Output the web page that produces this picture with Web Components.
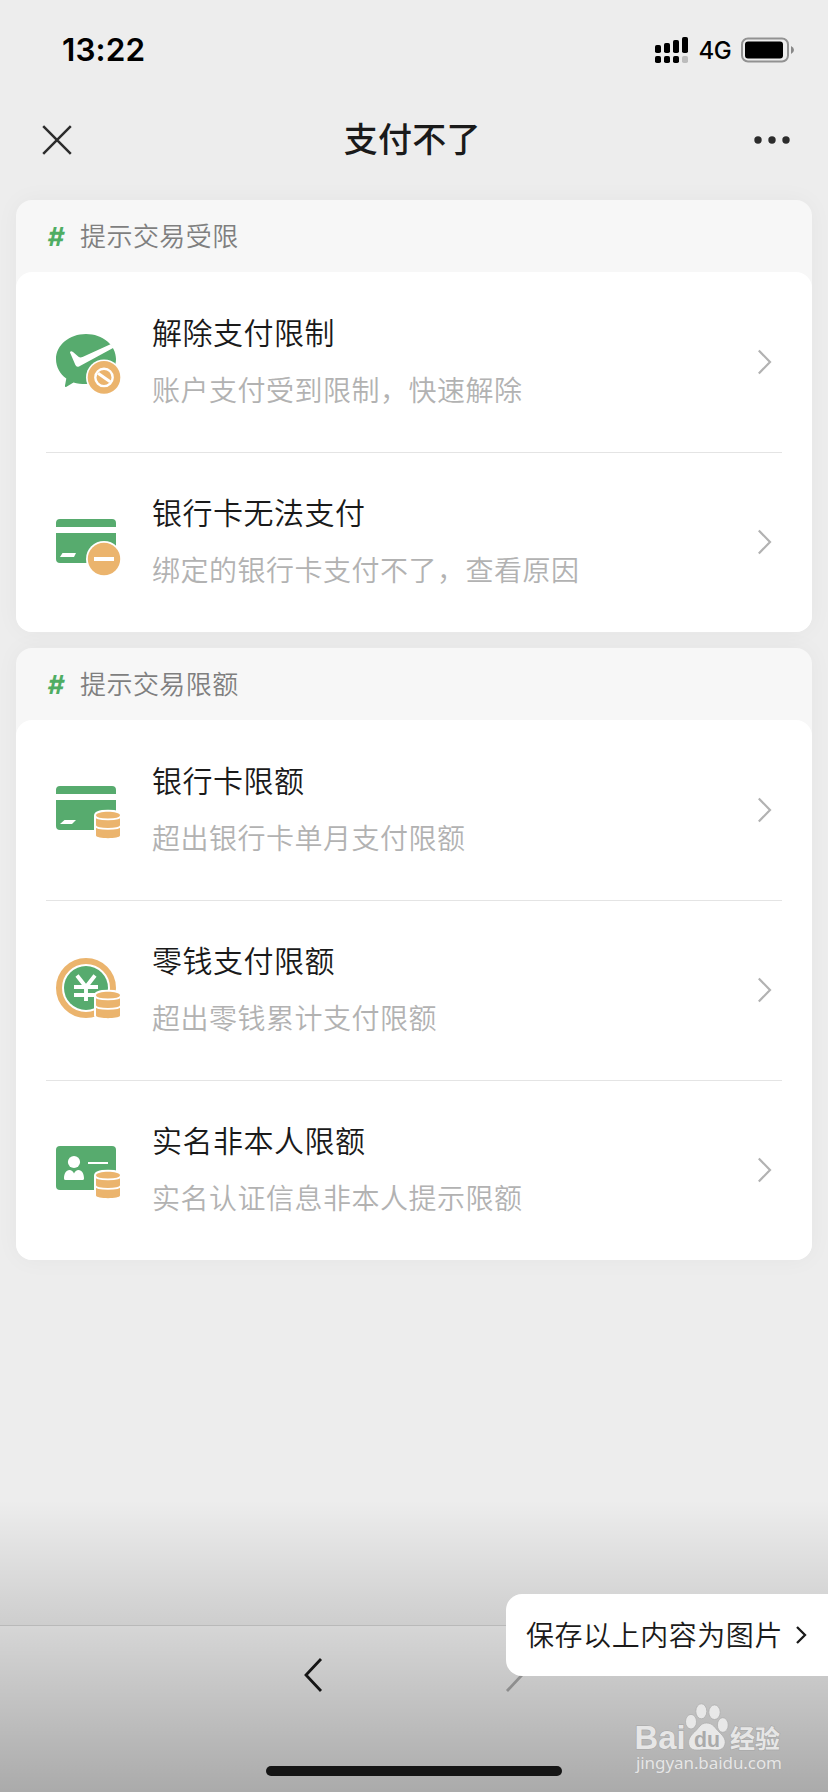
<!DOCTYPE html>
<html lang="zh-CN">
<head>
<meta charset="utf-8">
<title>支付不了</title>
<style>
html,body{margin:0;padding:0;height:1792px;overflow:hidden}
body{background:#ededed;font-family:Inter,"Noto Sans CJK SC",sans-serif;-webkit-font-smoothing:antialiased}
</style>
</head>
<body>
<help-page></help-page>
<script>
const define = (name, html, setup) => customElements.define(name, class extends HTMLElement {
  constructor() {
    super();
    this.attachShadow({ mode: 'open' }).innerHTML = html;
  }
  connectedCallback() { if (setup) setup(this, this.shadowRoot); }
});

const G = '#57ab6e', O = '#ebb46d';
const coins = `<path fill="${O}" stroke="#fff" stroke-width="4" paint-order="stroke" d="M96 95.500C96 90.500 120 90.500 120 95.500V115.500C120 119 96 119 96 115.500Z"/>
<path d="M95 95.800C96 100.600 120 100.600 121 95.800M95 105.600C97 110 119 110 121 105.600" fill="none" stroke="#fff" stroke-width="1.900"/>`;
const icons = {
  limit: `<path fill="${G}" d="M86 62C102.600 62 116 73 116 87S102.600 112 86 112C81.500 112 77.200 111.700 73.500 110.500L66.500 114.700Q64.500 115.600 65 113.500L66.300 106.500C60 102 56 95 56 87C56 73 69.400 62 86 62Z"/>
<path fill="#fff" d="M70 80.500Q70.500 78.500 73 80L78.500 84.700Q80.200 86 82.500 85L110.500 72.200L114 75.400L79 94.400Q76.500 95.500 75.400 93Z"/>
<circle cx="104" cy="105.400" r="18" fill="#fff"/><circle cx="104" cy="105.400" r="16.300" fill="${O}"/>
<circle cx="104" cy="105.400" r="8.700" fill="none" stroke="#fff" stroke-width="2.400"/><path d="M98 101.200L110.200 109.700" stroke="#fff" stroke-width="3"/>`,
  card: `<path fill="${G}" d="M56 75V71Q56 67 60 67H112Q116 67 116 71V75ZM56 81H116V107Q116 111 112 111H60Q56 111 56 107Z"/>
<path fill="#fff" d="M62.500 101H76L74 105H60Z"/><circle cx="104" cy="107" r="18" fill="#fff"/><circle cx="104" cy="107" r="16.200" fill="${O}"/><path d="M94 107H114" stroke="#fff" stroke-width="4"/>`,
  quota: `<path fill="${G}" d="M56 74V70Q56 66 60 66H112Q116 66 116 70V74ZM56 80H116V106Q116 110 112 110H60Q56 110 56 106Z"/><path fill="#fff" d="M64.500 100H76L72 104H60Z"/>${coins}`,
  balance: `<circle cx="86" cy="88" r="27" fill="none" stroke="${O}" stroke-width="6"/><circle cx="86" cy="88" r="22" fill="${G}"/>
<path d="M77 75.500L86 87L95 75.500M86 86V101M74 87H98M74 95H98" fill="none" stroke="#fff" stroke-width="3.900"/>${coins}`,
  person: `<rect x="56" y="66" width="60" height="44" rx="4" fill="${G}"/><circle cx="74" cy="82" r="6.100" fill="#fff"/>
<path fill="#fff" d="M64 98.500C64 94 66 90 69.500 90Q72.500 90 74 93.500Q75.500 90 78.500 90C82 90 84 94 84 98.500Q84 100 82.500 100H65.500Q64 100 64 98.500Z"/><path d="M88 83H108" stroke="#fff" stroke-width="2"/>${coins}`
};

define('status-bar', `<style>
:host{display:flex;height:100px;box-sizing:border-box;padding:0 33px 0 62px;align-items:center;justify-content:space-between;color:#000}
.time{font-size:31.500px;font-weight:600;line-height:40px;letter-spacing:.1px}
.right{display:flex;align-items:center}
.net{font-size:24px;font-weight:450;margin:0 10px 0 10px;letter-spacing:-.6px;line-height:30px;padding-top:1px}
svg{display:block}
</style><span class="time">13:22</span>
<div class="right">
<svg width="34" height="28" viewBox="0 0 34 28"><g><rect y="9" width="6" height="8" rx="1.800"/><rect x="9" y="7" width="6" height="10" rx="1.800"/><rect x="18" y="4" width="6" height="13" rx="1.800"/><rect x="27" y="1" width="6" height="16" rx="1.800"/><rect y="20" width="6" height="7" rx="1.800"/><rect x="9" y="20" width="6" height="7" rx="1.800"/><rect x="18" y="20" width="6" height="7" rx="1.800"/><rect x="27" y="20" width="6" height="7" rx="1.800" fill="#bcbcbc"/></g></svg>
<span class="net">4G</span>
<svg width="54" height="26" viewBox="0 0 54 26"><rect x="1" y="1.500" width="46" height="23" rx="6" fill="none" stroke="#929292" stroke-width="2"/><rect x="4" y="4.500" width="38" height="17" rx="3" fill="#000"/><path d="M50 9Q53 10.500 53 13T50 17Z" fill="#888"/></svg>
</div>`);

define('nav-bar', `<style>
:host{display:grid;grid-template-columns:1fr auto 1fr;height:80px;align-items:center;padding:0 38px 0 41.500px;color:#1a1a1a}
.t{font-size:34px;line-height:48px;font-weight:500;letter-spacing:.2px;transform:translateX(-3.500px)}
svg{display:block}.more{justify-self:end}
</style>
<svg width="30" height="30" viewBox="0 0 30 30"><path d="M1.200 1.200L28.800 28.800M28.800 1.200L1.200 28.800" stroke="#2c2c2c" stroke-width="2.500"/></svg>
<span class="t"><slot></slot></span>
<svg class="more" width="36" height="8" viewBox="0 0 36 8" fill="#2c2c2c"><circle cx="4" cy="4" r="3.700"/><circle cx="18" cy="4" r="3.700"/><circle cx="32" cy="4" r="3.700"/></svg>`);

define('help-card', `<style>
:host{display:block;background:#f7f7f7;border-radius:16px;box-shadow:0 0 24px rgba(0,0,0,.04)}
header{display:flex;align-items:center;height:72px;padding-left:32px;color:#7f7f7f;font-size:26px;letter-spacing:.45px}
header span{font-weight:350;padding-bottom:3px}
b{width:17px;margin-right:15px;color:#4fad63;font-weight:700;font-size:26px;letter-spacing:0;transform:skewX(-4deg)}
.rows{background:#fff;border-radius:16px}
</style><header><b>#</b><span></span></header><div class="rows"><slot></slot></div>`,
(el, r) => { r.querySelector('header span').textContent = el.getAttribute('heading'); });

define('help-row', `<style>
:host{display:flex;position:relative;height:180px;box-sizing:border-box;padding:0 40px 0 34px;align-items:center}
:host(:not(:first-child))::before{content:"";position:absolute;left:30px;right:30px;top:0;height:1px;background:#e4e4e4}
svg{display:block;flex:none}
.text{flex:1;margin-left:26px}
.title{font-size:30px;line-height:44px;letter-spacing:.5px;color:#1a1a1a;font-weight:350;margin-top:-2px}
.desc{font-size:28px;line-height:40px;letter-spacing:.5px;color:#b2b2b2;margin-top:16px;font-weight:350}
</style><svg class="icon" width="76" height="76" viewBox="50 52 76 76"></svg>
<div class="text"><div class="title"></div><div class="desc"><slot></slot></div></div>
<svg width="16" height="28" viewBox="0 0 16 28"><path d="M2.800 2.500L14 14L2.800 25.500" fill="none" stroke="#b2b2b2" stroke-width="2.200"/></svg>`,
(el, r) => {
  r.querySelector('.icon').innerHTML = icons[el.getAttribute('icon')];
  r.querySelector('.title').textContent = el.getAttribute('heading');
});

define('browser-bar', `<style>
:host{display:flex;flex-direction:column;align-items:center;height:167px;box-sizing:border-box;background:#f7f7f7;border-top:1px solid #d5d5d5}
.arrows{display:flex;justify-content:space-between;width:222px;height:34px;margin-top:32px}
.home{width:296px;height:10px;border-radius:5px;background:#151515;margin-top:74px;position:relative;z-index:3}
svg{display:block}
.back{position:relative;z-index:3}
</style><div class="arrows">
<svg class="back" width="20" height="34" viewBox="0 0 20 34"><path d="M18 1L3 17L18 33" fill="none" stroke="#151515" stroke-width="2.800"/></svg>
<svg width="20" height="34" viewBox="0 0 20 34"><path d="M2 1L17 17L2 33" fill="none" stroke="#b0b0b0" stroke-width="2.800"/></svg></div><div class="home"></div>`);

define('save-button', `<style>
:host{display:flex;align-items:center;box-sizing:border-box;width:322px;height:82px;padding-left:20px;background:#fff;border-radius:16px 0 0 16px;color:#1a1a1a;font-size:28px;letter-spacing:.55px}
span{font-weight:350;padding-bottom:2px}
svg{margin-left:12px}
</style><span><slot></slot></span><svg width="14" height="20" viewBox="0 0 14 20"><path d="M2 2L10 10L2 18" fill="none" stroke="#1a1a1a" stroke-width="2.300"/></svg>`);

define('brand-mark', `<style>
:host{display:block;width:150px;height:76px}
text{fill:#e6e6e6;stroke:#a6a6a6;stroke-width:1.200;paint-order:stroke}
svg{display:block}
</style><svg width="150" height="76" viewBox="634 1700 150 76">
<text x="634.500" y="1749" font-family="Liberation Sans" font-weight="700" font-size="33" textLength="51" lengthAdjust="spacingAndGlyphs">Bai</text>
<g fill="#e8e8e8" stroke="#ababab" stroke-width=".7"><ellipse cx="691" cy="1721.700" rx="5.500" ry="7.300"/><ellipse cx="701.300" cy="1711.300" rx="5.500" ry="7.500"/><ellipse cx="714.500" cy="1712.200" rx="5.700" ry="7.300"/><ellipse cx="722.800" cy="1725" rx="5.400" ry="7.300"/>
<path d="M706.500 1723C713 1723 715 1728 719 1732C724 1736.500 727 1741 724 1746.500C721 1752 713 1749.500 707 1749.500S692 1752 689.500 1746.500C687 1741 690 1736 694.500 1732C699 1728 700.500 1723 706.500 1723Z"/></g>
<text x="694" y="1746.500" font-family="Liberation Sans" font-weight="700" font-size="22" textLength="26" lengthAdjust="spacingAndGlyphs" style="fill:#aaa;stroke:none">du</text>
<text x="730" y="1747.500" font-family="Noto Sans CJK SC" font-weight="700" font-size="25">经验</text>
<text x="636" y="1769" font-family="Noto Sans" font-size="17" textLength="146" lengthAdjust="spacing" style="stroke-width:.6">jingyan.baidu.com</text></svg>`);

define('help-page', `<style>
:host{display:flex;flex-direction:column;position:relative;width:828px;height:1792px;background:#ededed;overflow:hidden}
main{display:flex;flex-direction:column;gap:16px;padding:20px 16px 0;flex:1}
.shade{position:absolute;left:0;right:0;bottom:0;height:292px;background:linear-gradient(rgba(0,0,0,0),rgba(0,0,0,.31));z-index:2}
save-button{position:absolute;right:0;top:1594px;z-index:4}
brand-mark{position:absolute;right:44px;bottom:16px;z-index:4}
</style>
<status-bar></status-bar>
<nav-bar>支付不了</nav-bar>
<main>
<help-card heading="提示交易受限">
<help-row icon="limit" heading="解除支付限制">账户支付受到限制，快速解除</help-row>
<help-row icon="card" heading="银行卡无法支付">绑定的银行卡支付不了，查看原因</help-row>
</help-card>
<help-card heading="提示交易限额">
<help-row icon="quota" heading="银行卡限额">超出银行卡单月支付限额</help-row>
<help-row icon="balance" heading="零钱支付限额">超出零钱累计支付限额</help-row>
<help-row icon="person" heading="实名非本人限额">实名认证信息非本人提示限额</help-row>
</help-card>
</main>
<browser-bar></browser-bar>
<div class="shade"></div>
<save-button>保存以上内容为图片</save-button>
<brand-mark></brand-mark>`);
</script>
</body>
</html>
